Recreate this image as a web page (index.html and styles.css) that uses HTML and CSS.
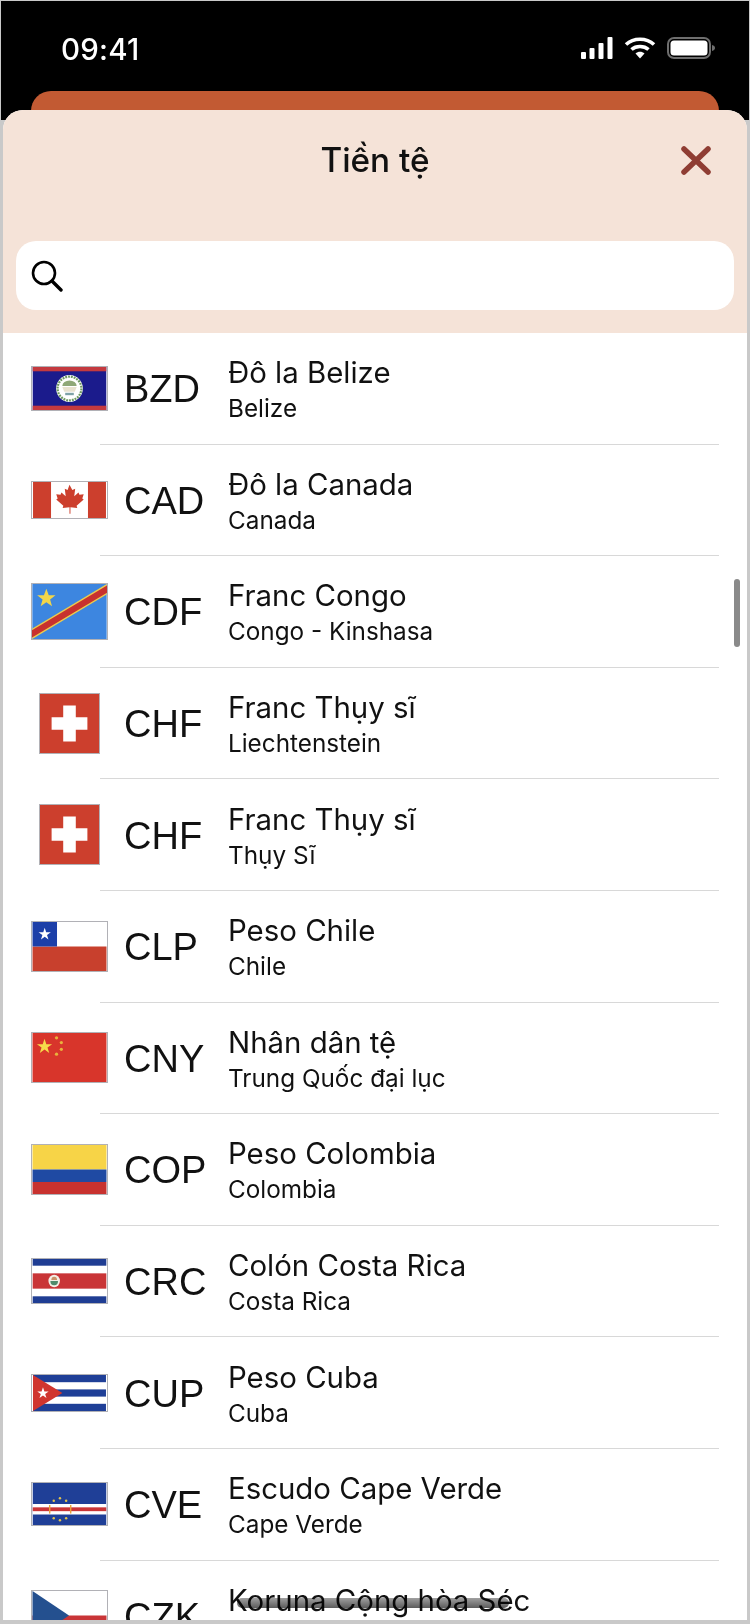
FILE: index.html
```html
<!DOCTYPE html>
<html lang="vi">
<head>
    <meta charset="UTF-8">
    <meta name="viewport" content="width=device-width, initial-scale=1.0">
    <title>Tiền tệ</title>
    <link rel="stylesheet" href="styles.css">
</head>
<body>
    <div class="screen">
        <div class="status-bar">
            <span class="time">09:41</span>
            <div class="status-icons">
                <svg width="32" height="22" viewBox="0 0 32 22"><g fill="#fff"><rect x="0" y="15" width="5" height="7" rx="1"/><rect x="8.5" y="11" width="5" height="11" rx="1"/><rect x="17.5" y="6" width="5" height="16" rx="1"/><rect x="26.5" y="0" width="5" height="22" rx="1"/></g></svg>
                <svg width="32" height="22" viewBox="0 0 32 22"><g fill="none" stroke="#fff" stroke-width="3.6"><path d="M2 7.500C9.500 .5 22.500 .5 30 7.500"/><path d="M7.500 12.500C12 8.500 20 8.500 24.500 12.500"/></g><path d="M11.500 16.500C14 14.300 18 14.300 20.500 16.500L16 21.500Z" fill="#fff"/></svg>
                <svg width="48" height="22" viewBox="0 0 48 22"><rect x="1" y="1" width="42" height="20" rx="6" fill="none" stroke="#6e6e6e" stroke-width="2"/><rect x="3.5" y="3.5" width="37" height="15" rx="3.5" fill="#fff"/><path d="M45 8c2 .4 3 1.600 3 3s-1 2.600-3 3z" fill="#6e6e6e"/></svg>
            </div>
        </div>
        <div class="back-layer"><div class="back-card"></div></div>

        <div class="sheet">
            <div class="sheet-head">
                <div class="title-row">
                    <h1>Tiền tệ</h1>
                    <button class="close" aria-label="Đóng">
                        <svg width="30" height="29" viewBox="0 0 30 29"><path d="M3 3L27 26M27 3L3 26" fill="none" stroke="#8f3d33" stroke-width="5.5" stroke-linecap="round"/></svg>
                    </button>
                </div>
                <div class="search">
                    <svg width="32" height="32" viewBox="0 0 32 32"><circle cx="13" cy="13" r="11" fill="none" stroke="#000" stroke-width="2.6"/><path d="M21 21L30 30" stroke="#000" stroke-width="3.4" stroke-linecap="round"/></svg>
                </div>
            </div>

            <div class="list">
                <div class="row">
                    <svg class="flag" width="77" height="45" viewBox="0 0 77 45">
                        <rect width="77" height="45" fill="#1b1b8c"/>
                        <rect width="77" height="4.500" fill="#c43a3f"/><rect y="40.500" width="77" height="4.500" fill="#c43a3f"/>
                        <circle cx="38.5" cy="22.5" r="14" fill="#fff"/>
                        <circle cx="38.5" cy="22.5" r="12.500" fill="none" stroke="#6f9a62" stroke-width="2.4" stroke-dasharray="2 1"/>
                        <path d="M31 20a7.500 6 0 0 1 15 0z" fill="#8fa878"/>
                        <path d="M31 21h15l-2 5h-11z" fill="#e8e2cf"/>
                        <path d="M34 27h9v2.500h-9z" fill="#7fa3a8"/>
                    </svg>
                    <span class="code">BZD</span>
                    <div class="names"><div class="name">Đô la Belize</div><div class="place">Belize</div></div>
                </div>
                <div class="sep"></div>
                <div class="row">
                    <svg class="flag" width="77" height="38" viewBox="0 0 77 38">
                        <rect width="77" height="38" fill="#fff"/>
                        <rect width="19" height="38" fill="#cc3f2d"/><rect x="58" width="19" height="38" fill="#cc3f2d"/>
                        <path d="M38.5 3l3 5.500 3-1.500-1 8 4.500-4 1 2.500 4.500-.5-1.500 4.500 1.500 1-7.500 6.500.7 2.500-7.200-.8v6.800h-1v-6.800l-7.200.8.700-2.500-7.500-6.500 1.500-1-1.500-4.500 4.500.5 1-2.500 4.500 4-1-8 3 1.500z" fill="#cc3f2d"/>
                    </svg>
                    <span class="code">CAD</span>
                    <div class="names"><div class="name">Đô la Canada</div><div class="place">Canada</div></div>
                </div>
                <div class="sep"></div>
                <div class="row">
                    <svg class="flag" width="77" height="57" viewBox="0 0 77 57">
                        <rect width="77" height="57" fill="#3d86e0"/>
                        <path d="M0 46L77 0V11L0 57Z" fill="#eccb4c"/>
                        <path d="M0 49.500L77 3.500V7.500L0 53.500Z" fill="#c8322e" stroke="#c8322e" stroke-width="3"/>
                        <path d="M14.500 5l2.500 6.700h7l-5.600 4.300 2 7-5.900-4.200-5.900 4.200 2-7-5.600-4.300h7z" fill="#f2d64a"/>
                    </svg>
                    <span class="code">CDF</span>
                    <div class="names"><div class="name">Franc Congo</div><div class="place">Congo - Kinshasa</div></div>
                </div>
                <div class="sep"></div>
                <div class="row">
                    <svg class="flag flag-square" width="61" height="61" viewBox="0 0 61 61">
                        <rect width="61" height="61" fill="#cc3f2d"/>
                        <path d="M24 12h13v12h12v13h-12v12h-13v-12h-12v-13h12z" fill="#fff"/>
                    </svg>
                    <span class="code">CHF</span>
                    <div class="names"><div class="name">Franc Thụy sĩ</div><div class="place">Liechtenstein</div></div>
                </div>
                <div class="sep"></div>
                <div class="row">
                    <svg class="flag flag-square" width="61" height="61" viewBox="0 0 61 61">
                        <rect width="61" height="61" fill="#cc3f2d"/>
                        <path d="M24 12h13v12h12v13h-12v12h-13v-12h-12v-13h12z" fill="#fff"/>
                    </svg>
                    <span class="code">CHF</span>
                    <div class="names"><div class="name">Franc Thụy sĩ</div><div class="place">Thụy Sĩ</div></div>
                </div>
                <div class="sep"></div>
                <div class="row">
                    <svg class="flag" width="77" height="51" viewBox="0 0 77 51">
                        <rect width="77" height="25.5" fill="#fff"/>
                        <rect y="25.5" width="77" height="25.5" fill="#c8402d"/>
                        <rect width="25.5" height="25.5" fill="#1c3fa8"/>
                        <path d="M12.700 6l1.500 4.600h4.900l-4 2.900 1.500 4.700-3.900-2.900-3.900 2.900 1.500-4.700-4-2.900h4.900z" fill="#fff"/>
                    </svg>
                    <span class="code">CLP</span>
                    <div class="names"><div class="name">Peso Chile</div><div class="place">Chile</div></div>
                </div>
                <div class="sep"></div>
                <div class="row">
                    <svg class="flag" width="77" height="51" viewBox="0 0 77 51">
                        <rect width="77" height="51" fill="#d8352b"/>
                        <path d="M12.500 6l1.900 5.600h6l-4.800 3.500 1.800 5.700-4.900-3.500-4.900 3.500 1.800-5.700-4.800-3.500h6z" fill="#f6dc4a"/>
                        <g fill="#e8b23c"><circle cx="25" cy="5" r="1.700"/><circle cx="30" cy="10" r="1.700"/><circle cx="30" cy="17" r="1.700"/><circle cx="25" cy="22" r="1.700"/></g>
                    </svg>
                    <span class="code">CNY</span>
                    <div class="names"><div class="name">Nhân dân tệ</div><div class="place">Trung Quốc đại lục</div></div>
                </div>
                <div class="sep"></div>
                <div class="row">
                    <svg class="flag" width="77" height="51" viewBox="0 0 77 51">
                        <rect width="77" height="25.5" fill="#f7d447"/>
                        <rect y="25.5" width="77" height="13" fill="#1f4aa3"/>
                        <rect y="38.5" width="77" height="12.5" fill="#c8322f"/>
                    </svg>
                    <span class="code">COP</span>
                    <div class="names"><div class="name">Peso Colombia</div><div class="place">Colombia</div></div>
                </div>
                <div class="sep"></div>
                <div class="row">
                    <svg class="flag" width="77" height="46" viewBox="0 0 77 46">
                        <rect width="77" height="46" fill="#fff"/>
                        <rect width="77" height="7" fill="#1f3d93"/><rect y="39" width="77" height="7" fill="#1f3d93"/>
                        <rect y="15" width="77" height="16" fill="#c93537"/>
                        <ellipse cx="22.5" cy="23" rx="6" ry="6.500" fill="#f2efe6"/>
                        <path d="M18.500 23a4 4.500 0 0 0 8 0z" fill="#4f8a6c"/><path d="M19.500 22a3 3.500 0 0 1 6 0z" fill="#c9936a"/>
                    </svg>
                    <span class="code">CRC</span>
                    <div class="names"><div class="name">Colón Costa Rica</div><div class="place">Costa Rica</div></div>
                </div>
                <div class="sep"></div>
                <div class="row">
                    <svg class="flag" width="77" height="38" viewBox="0 0 77 38">
                        <rect width="77" height="38" fill="#fff"/>
                        <rect width="77" height="7.6" fill="#1f3f97"/><rect y="15.2" width="77" height="7.6" fill="#1f3f97"/><rect y="30.4" width="77" height="7.6" fill="#1f3f97"/>
                        <path d="M0 0L31 19L0 38Z" fill="#d0352f"/>
                        <path d="M10.500 13l1.500 4.300h4.500l-3.700 2.700 1.400 4.400-3.700-2.700-3.700 2.700 1.400-4.400-3.700-2.700h4.500z" fill="#fff"/>
                    </svg>
                    <span class="code">CUP</span>
                    <div class="names"><div class="name">Peso Cuba</div><div class="place">Cuba</div></div>
                </div>
                <div class="sep"></div>
                <div class="row">
                    <svg class="flag" width="77" height="44" viewBox="0 0 77 44">
                        <rect width="77" height="44" fill="#1f3f97"/>
                        <rect y="22" width="77" height="11" fill="#fff"/>
                        <rect y="25.5" width="77" height="4" fill="#c93537"/>
                        <g fill="#e3c34d"><circle cx="22" cy="18.5" r="1.3"/><circle cx="28.5" cy="16" r="1.3"/><circle cx="35" cy="18.5" r="1.3"/><circle cx="22" cy="37" r="1.3"/><circle cx="28.5" cy="39" r="1.3"/><circle cx="35" cy="37" r="1.3"/></g>
                        <g fill="#e8a33c"><rect x="17" y="23" width="1.5" height="9"/><rect x="39" y="23" width="1.5" height="9"/></g>
                    </svg>
                    <span class="code">CVE</span>
                    <div class="names"><div class="name">Escudo Cape Verde</div><div class="place">Cape Verde</div></div>
                </div>
                <div class="sep"></div>
                <div class="row">
                    <svg class="flag" width="77" height="51" viewBox="0 0 77 51">
                        <rect width="77" height="25.5" fill="#fff"/>
                        <rect y="25.5" width="77" height="25.5" fill="#c93537"/>
                        <path d="M0 0L38 25.500L0 51Z" fill="#24508f"/>
                    </svg>
                    <span class="code">CZK</span>
                    <div class="names names-single"><div class="name">Koruna Cộng hòa Séc</div></div>
                </div>
            </div>
            <div class="scroll-thumb"></div>
        </div>
        <div class="home-bar"></div>
    </div>
</body>
</html>
```

FILE: styles.css
```css
* {
    box-sizing: border-box;
}
body {
    margin: 0;
    background-color: #c9c9c9;
    font-family: Inter, "Liberation Sans", sans-serif;
    color: #111;
}
.screen {
    position: relative;
    height: 1624px;
    overflow: hidden;
}

/* status bar and the card behind the sheet */
.status-bar {
    display: flex;
    justify-content: space-between;
    height: 90px;
    margin: 1px 1px 0 1px;
    padding: 36px 34px 0 60px;
    background-color: #000;
}
.time {
    color: #fff;
    font-size: 29.500px;
    font-weight: 500;
    line-height: 24px;
    letter-spacing: 0.2px;
}
.status-icons {
    display: flex;
    align-items: flex-start;
    gap: 11px;
}
.back-layer {
    height: 29px;
    margin: 0 1px;
    padding: 0 30px;
    background-color: #000;
}
.back-card {
    height: 29px;
    background-color: #c25a33;
    border-radius: 20px 20px 0 0;
}

/* bottom sheet */
.sheet {
    position: relative;
    height: 1510px;
    margin: -10px 3px 0 3px;
    background-color: #fff;
    border-radius: 20px 20px 0 0;
    overflow: hidden;
}
.sheet-head {
    height: 223px;
    padding: 0 13px;
    background-color: #f5e3d8;
}
.title-row {
    display: flex;
    justify-content: center;
    align-items: center;
    position: relative;
    height: 131px;
    padding-bottom: 31px;
}
h1 {
    margin: 0;
    font-size: 33.300px;
    font-weight: 500;
}
.close {
    position: absolute;
    right: 23px;
    top: 36px;
    padding: 0;
    background: none;
    border: none;
    line-height: 0;
}
.search {
    display: flex;
    align-items: center;
    height: 69px;
    padding-left: 15px;
    background-color: #fff;
    border-radius: 20px;
}

/* currency rows */
.row {
    display: flex;
    align-items: center;
    height: 110.600px;
    padding-left: 28px;
}
.flag {
    flex: none;
    margin: 0 16px 0 0;
    border: 1px solid rgba(100, 100, 110, 0.5);
}
.flag-square {
    margin: 0 24px 0 8px;
}
.code {
    flex: none;
    width: 104px;
    padding-top: 3px;
    font-family: "Liberation Sans", Arial, sans-serif;
    font-size: 38px;
}
.names {
    padding-top: 3px;
}
.names-single {
    padding-bottom: 34px;
}
.name {
    font-size: 29.400px;
    line-height: 37px;
}
.place {
    font-size: 24.300px;
    line-height: 34px;
}
.sep {
    height: 1px;
    margin: 0 28px 0 97px;
    background-color: #d8d8d8;
}
.scroll-thumb {
    position: absolute;
    top: 469px;
    right: 7px;
    width: 6px;
    height: 68px;
    background-color: #8a8a8a;
    border-radius: 3px;
}
.home-bar {
    position: absolute;
    left: 237px;
    top: 1598px;
    width: 272px;
    height: 10px;
    background: linear-gradient(#a0a0a0, #5c5c5c);
    border-radius: 5px;
    mix-blend-mode: multiply;
    filter: blur(0.7px);
}
```
